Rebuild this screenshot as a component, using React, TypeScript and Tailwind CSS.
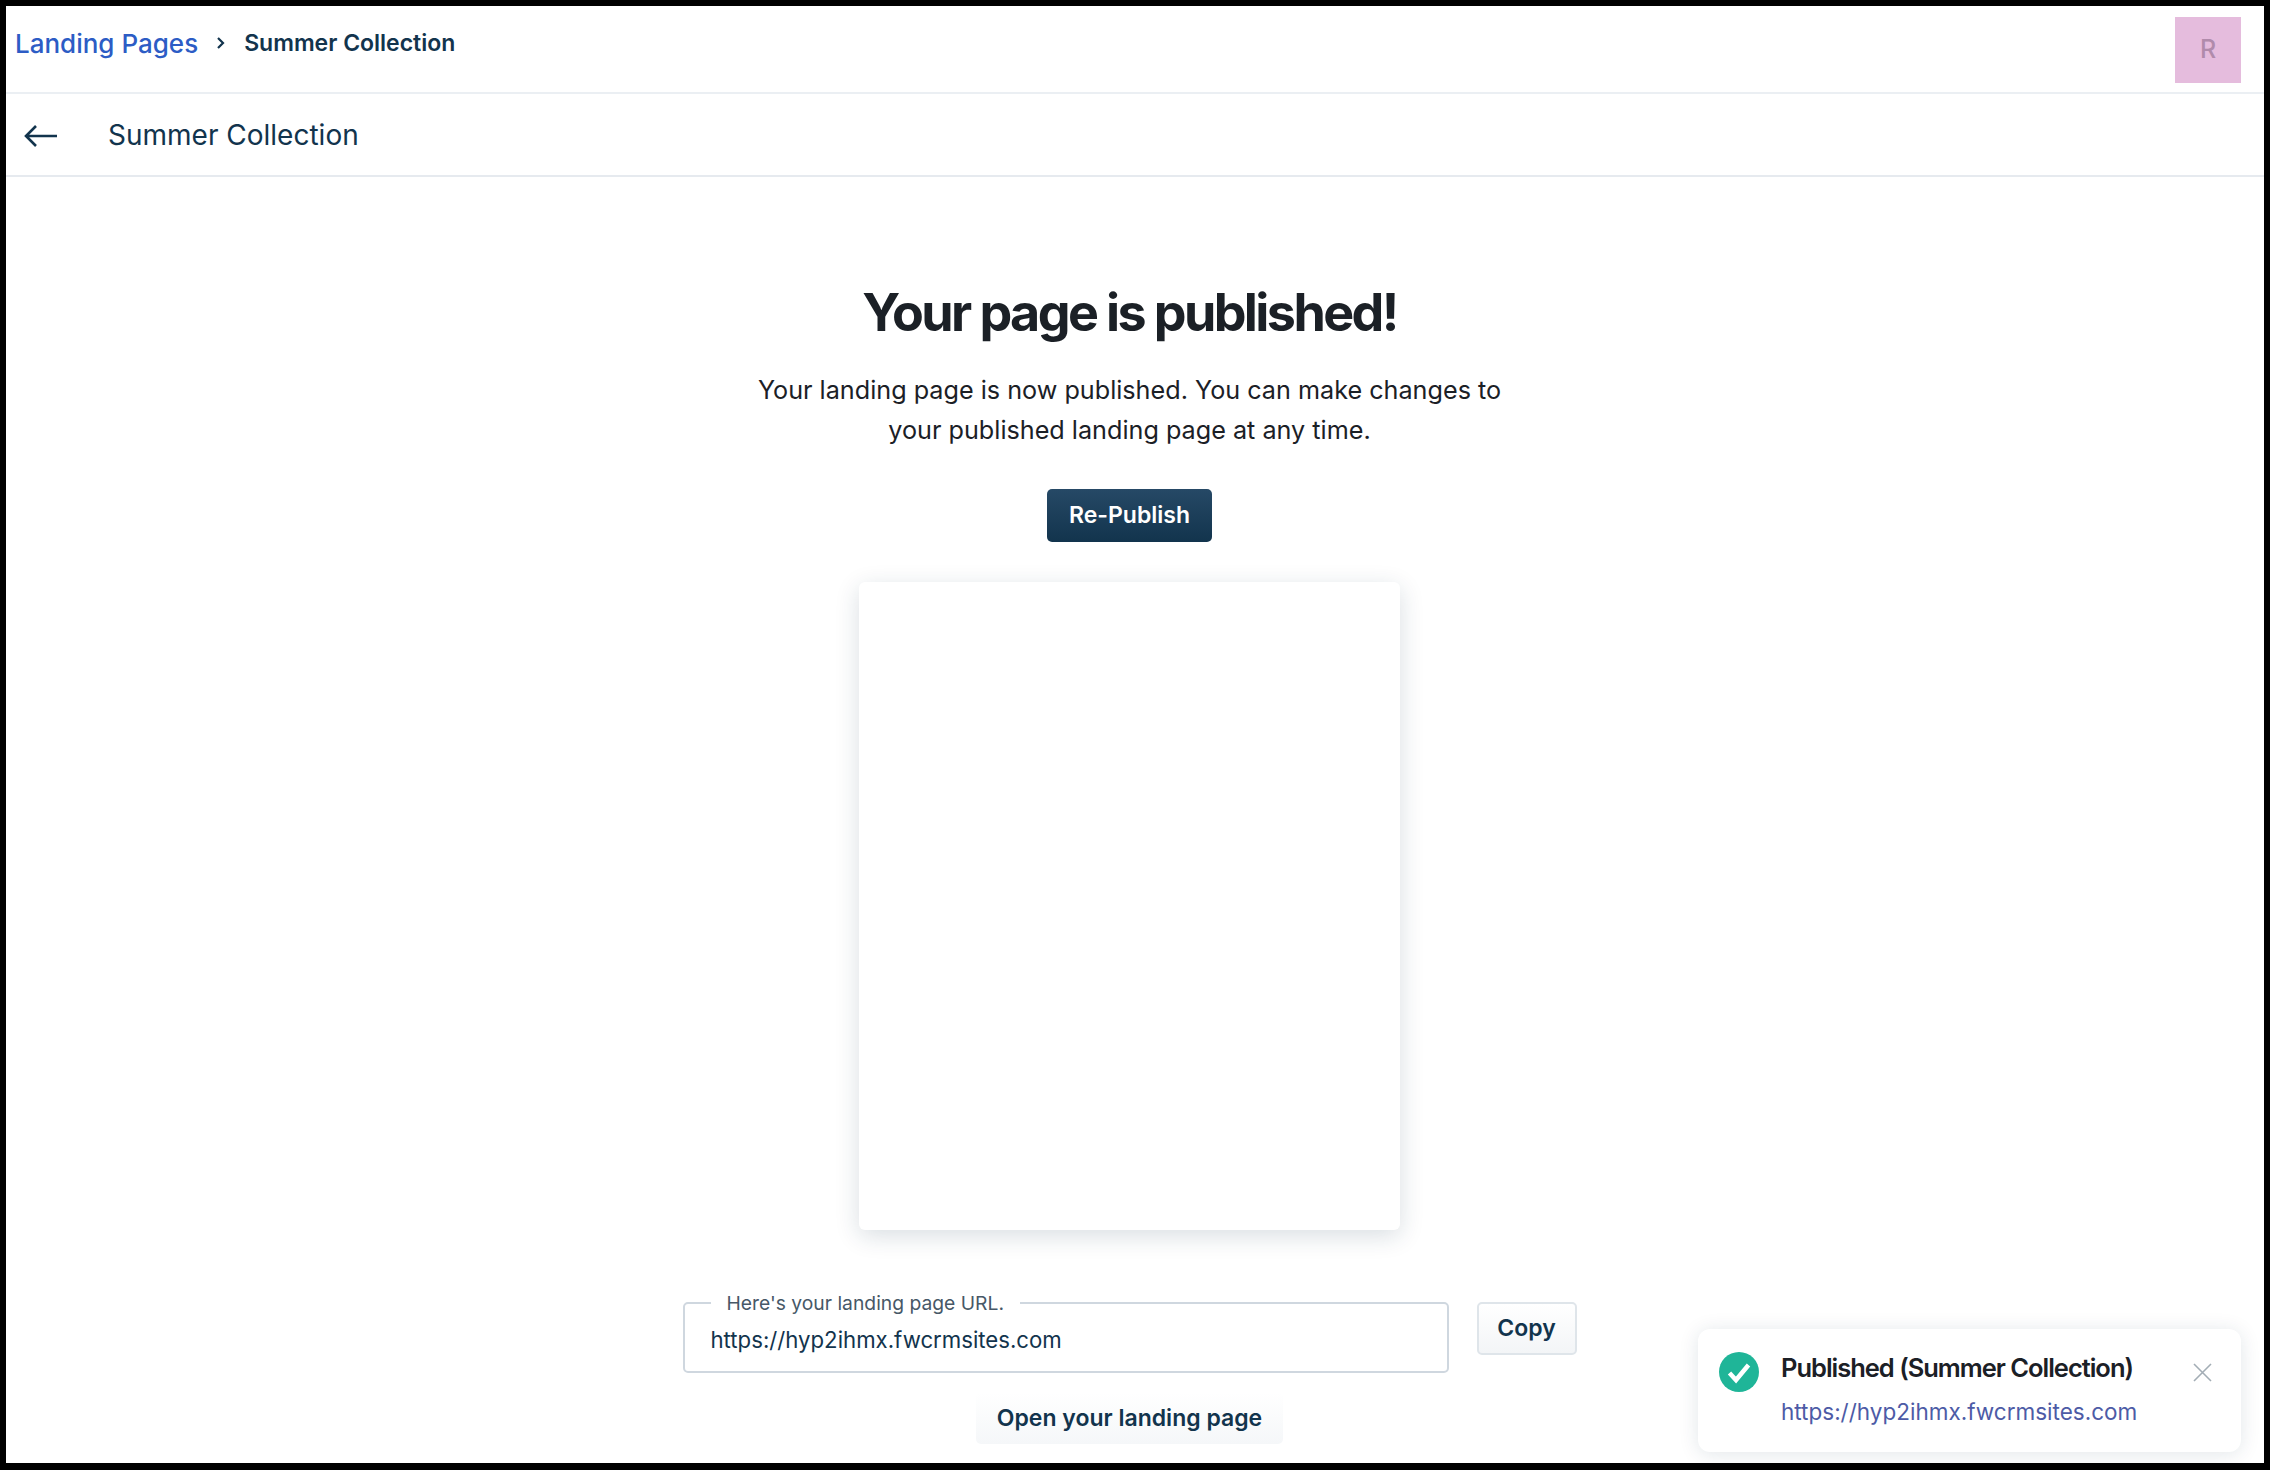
import React from "react";

export default function App() {
  return (
    <div className="relative h-[1470px] w-[2270px] overflow-hidden border-t-[6px] border-r-[6px] border-b-[7px] border-l-[6px] border-black bg-white font-['Inter',sans-serif]">
      <header className="flex h-[88px] items-start justify-between border-b-2 border-[#ebeff3] pr-[23px] pl-[9px]">
        <nav className="flex h-[74px] items-center">
          <span className="text-[26px] font-medium text-[#2c5cc5]">Landing Pages</span>
          <svg className="mx-[16px] h-[16px] w-[14px] text-[#12344d]" viewBox="0 0 14 16" fill="none" stroke="currentColor" strokeWidth="2.2">
            <path d="M4 3l5 5-5 5" />
          </svg>
          <span className="text-[23px] font-semibold text-[#12344d]">Summer Collection</span>
        </nav>
        <div className="mt-[11px] flex h-[66px] w-[66px] items-center justify-center bg-[#e5bcdd] text-[25px] font-medium text-[#b08bab]">R</div>
      </header>

      <div className="flex h-[83px] items-center border-b-2 border-[#e6eaef] pl-[18px]">
        <svg className="mt-[2px] h-[26px] w-[34px] text-[#12344d]" viewBox="0 0 34 26" fill="none" stroke="currentColor" strokeWidth="2.6">
          <path d="M33 13H2M12 3L2 13l10 10" />
        </svg>
        <h2 className="ml-[50px] text-[28px] font-normal text-[#12344d]">Summer Collection</h2>
      </div>

      <main className="flex flex-col items-center pr-[11px]">
        <h1 className="mt-[101px] text-[52px] leading-[70px] font-bold tracking-[-0.05em] text-[#1b2026]">Your page is published!</h1>
        <p className="mt-[22px] w-[800px] text-center text-[25.2px] leading-[40px] text-[#1b2026]">
          Your landing page is now published. You can make changes to
          <br />
          your published landing page at any time.
        </p>
        <button className="mt-[39px] h-[53px] w-[165px] rounded-[5px] bg-gradient-to-b from-[#264966] to-[#12344d] text-[23px] font-semibold text-white">Re-Publish</button>
        <div className="mt-[40px] h-[648px] w-[541px] rounded-[6px] bg-white shadow-[0_6px_24px_rgba(18,52,77,0.16)]" />
        <div className="mt-[73px] flex w-[894px] items-start">
          <fieldset className="-mt-[13px] h-[83px] w-[766px] rounded-[5px] border-2 border-[#cfd7df] pr-[24px] pl-[26px]">
            <legend className="px-[16px] text-[19.3px] leading-[26px] text-[#475867]">Here's your landing page URL.</legend>
            <div className="pt-[6px] text-[22.2px] leading-[36px] text-[#12344d]">https://hyp2ihmx.fwcrmsites.com</div>
          </fieldset>
          <button className="ml-[28px] -mt-[1px] h-[53px] w-[100px] rounded-[5px] border-2 border-[#dfe5ea] bg-gradient-to-b from-white to-[#f3f5f7] text-[23px] font-semibold text-[#12344d]">Copy</button>
        </div>
        <button className="mt-[20px] h-[51px] w-[307px] rounded-[5px] bg-gradient-to-b from-white to-[#f5f7f9] text-[23px] font-semibold text-[#12344d]">Open your landing page</button>
      </main>

      <div className="absolute top-[1323px] left-[1692px] flex h-[123px] w-[543px] items-start rounded-[12px] bg-white pt-[23px] pl-[21px] shadow-[0_2px_20px_rgba(18,52,77,0.12)]">
        <svg className="h-[40px] w-[40px] shrink-0" viewBox="0 0 40 40">
          <circle cx="20" cy="20" r="20" fill="#1fb598" />
          <path d="M10.5 21l6.5 7 12.5-15" fill="none" stroke="#fff" strokeWidth="4.5" />
        </svg>
        <div className="ml-[22px] w-[380px]">
          <div className="text-[25.5px] leading-[32px] font-semibold tracking-[-0.04em] text-[#1b2026]">Published (Summer Collection)</div>
          <div className="mt-[12px] text-[22.5px] leading-[32px] text-[#4d5ba6]">https://hyp2ihmx.fwcrmsites.com</div>
        </div>
        <svg className="mt-[11px] ml-[32px] h-[19px] w-[19px] text-[#a3adb5]" viewBox="0 0 19 19" fill="none" stroke="currentColor" strokeWidth="1.6">
          <path d="M1 1l17 17M18 1L1 18" />
        </svg>
      </div>
    </div>
  );
}
